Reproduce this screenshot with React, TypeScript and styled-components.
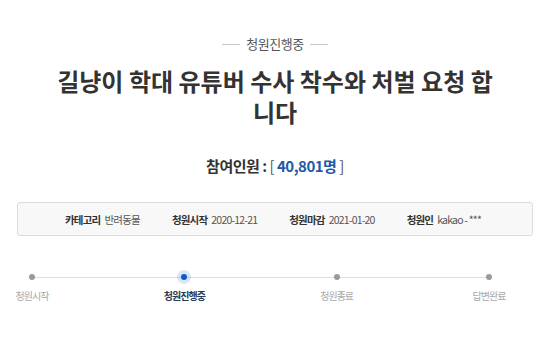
import React, { FC } from "react";
import styled, { createGlobalStyle } from "styled-components";

const GlobalStyle = createGlobalStyle`
  body {
    margin: 0;
    background: #fff;
    font-family: "Noto Sans CJK KR", "Noto Sans", sans-serif;
    color: #333;
  }
`;

const steps = ["청원시작", "청원진행중", "청원종료", "답변완료"];
const activeStep = 1;

const info = [
  { label: "카테고리", value: "반려동물" },
  { label: "청원시작", value: "2020-12-21" },
  { label: "청원마감", value: "2021-01-20" },
  { label: "청원인", value: "kakao - ***" },
];

const App: FC = () => {
  return (
    <Page>
      <GlobalStyle />
      <Status>
        <Dash />
        <span>청원진행중</span>
        <Dash />
      </Status>
      <Title>길냥이 학대 유튜버 수사 착수와 처벌 요청 합니다</Title>
      <Count>
        참여인원 : <Bracket>[</Bracket> <Num>40,801명</Num> <Bracket>]</Bracket>
      </Count>
      <InfoBox>
        {info.map((item) => (
          <InfoItem key={item.label}>
            <InfoLabel>{item.label}</InfoLabel>
            <span>{item.value}</span>
          </InfoItem>
        ))}
      </InfoBox>
      <Stepper>
        {steps.map((s, i) => (
          <Step key={s}>
            <DotRow>
              <Dot active={i === activeStep} />
            </DotRow>
            <StepLabel active={i === activeStep}>{s}</StepLabel>
          </Step>
        ))}
      </Stepper>
    </Page>
  );
};

const Page = styled.div`
  width: 550px;
  height: 344px;
  overflow: hidden;
  display: flex;
  flex-direction: column;
  align-items: center;
`;

const Status = styled.div`
  margin-top: 35px;
  display: flex;
  align-items: center;
  gap: 6px;
  font-size: 13px;
  line-height: 18px;
  letter-spacing: -0.5px;
  color: #555;
`;

const Dash = styled.i`
  display: block;
  width: 18px;
  height: 1px;
  background: #c8c8c8;
`;

const Title = styled.h1`
  margin: 12px 0 0;
  width: 452px;
  font-size: 24px;
  line-height: 31px;
  font-weight: 700;
  text-align: center;
  color: #333;
  letter-spacing: 0;
`;

const Count = styled.div`
  margin-top: 28px;
  font-size: 15px;
  line-height: 22px;
  font-weight: 700;
  color: #333;
  letter-spacing: -0.5px;
`;

const Bracket = styled.span`
  color: #555;
  font-weight: 400;
`;

const Num = styled.span`
  color: #1d5aa8;
`;

const InfoBox = styled.div`
  margin-top: 25px;
  width: 516px;
  height: 34px;
  box-sizing: border-box;
  border: 1px solid #dcdcdc;
  border-radius: 3px;
  background: #f8f8f8;
  display: flex;
  align-items: center;
  justify-content: center;
  gap: 28px;
  font-size: 10.5px;
  letter-spacing: -0.8px;
  color: #555;
`;

const InfoItem = styled.div`
  display: flex;
  gap: 4px;
  padding-right: 4px;
`;

const InfoLabel = styled.b`
  color: #333;
  font-weight: 700;
`;

const Stepper = styled.div`
  position: relative;
  margin: 34px 31px 0 2px;
  align-self: stretch;
  display: flex;
  justify-content: space-between;
  &::before {
    content: "";
    position: absolute;
    left: 30px;
    right: 30px;
    top: 7px;
    height: 1px;
    background: #dddddd;
  }
`;

const Step = styled.div`
  position: relative;
  width: 60px;
  display: flex;
  flex-direction: column;
  align-items: center;
`;

const DotRow = styled.div`
  height: 14px;
  display: flex;
  align-items: center;
`;

const Dot = styled.span<{ active?: boolean }>`
  width: 6px;
  height: 6px;
  border-radius: 50%;
  background: ${(p) => (p.active ? "#0f5cc4" : "#9a9a9a")};
  box-shadow: ${(p) => (p.active ? "0 0 0 4px rgba(15, 92, 196, 0.15)" : "none")};
`;

const StepLabel = styled.span<{ active?: boolean }>`
  margin-top: 5px;
  font-size: 10px;
  line-height: 14px;
  letter-spacing: -1px;
  white-space: nowrap;
  color: ${(p) => (p.active ? "#2b3a55" : "#a8a8a8")};
  font-weight: ${(p) => (p.active ? 700 : 400)};
`;

export default App;
